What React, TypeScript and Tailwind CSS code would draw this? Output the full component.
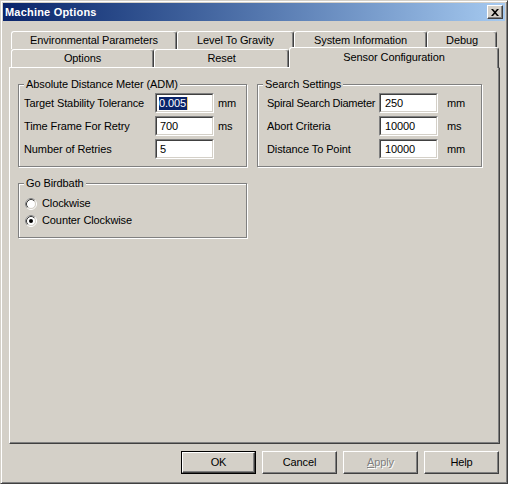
import React from "react";

const raised =
  "border border-t-white border-l-white border-r-[#404040] border-b-[#404040] shadow-[inset_-1px_-1px_0_#808080]";

function Tab({ label, w, selected }: { label: string; w: string; selected?: boolean }) {
  if (selected) {
    return (
      <div
        className={`${w} h-[21px] -mb-[1px] relative z-10 shrink-0 flex items-center justify-center bg-[#d4d0c8] border-t border-l border-r border-t-white border-l-white border-r-[#404040] rounded-t-[3px] shadow-[inset_-1px_0_0_#808080] pb-[2px]`}
      >
        {label}
      </div>
    );
  }
  return (
    <div
      className={`${w} h-[18px] shrink-0 flex items-center justify-center bg-[#d4d0c8] border-t border-l border-r border-t-white border-l-white border-r-[#404040] rounded-t-[3px] shadow-[inset_-1px_0_0_#808080]`}
    >
      {label}
    </div>
  );
}

function Field({ value, selected, pl }: { value: string; selected?: boolean; pl: string }) {
  return (
    <div className="w-[59px] h-[20px] border border-t-[#808080] border-l-[#808080] border-r-white border-b-white">
      <div
        className={`h-full border border-t-[#404040] border-l-[#404040] border-r-[#d4d0c8] border-b-[#d4d0c8] bg-white flex items-center ${pl}`}
      >
        {selected ? (
          <>
            <span className="bg-[#0a246a] text-white leading-[13px] pr-[1px]">{value}</span>
            <span className="w-[1px] h-[13px] bg-[#f0cf7c]" />
          </>
        ) : (
          <span className="leading-[13px]">{value}</span>
        )}
      </div>
    </div>
  );
}

function Group({
  title,
  w,
  children,
  cls,
  inner,
}: {
  title: string;
  w: string;
  children: React.ReactNode;
  cls?: string;
  inner: string;
}) {
  return (
    <div
      className={`${w} border border-[#808080] shadow-[inset_1px_1px_0_#ffffff,1px_1px_0_#ffffff] ${cls ?? ""}`}
    >
      <div className="-mt-[7px] ml-[5px] px-[2px] w-fit bg-[#d4d0c8] leading-[13px] h-[13px] whitespace-nowrap">
        {title}
      </div>
      <div className={inner}>{children}</div>
    </div>
  );
}

function Radio({ checked, label }: { checked?: boolean; label: string }) {
  return (
    <div className="h-[17px] flex items-center gap-[5px]">
      <svg width="12" height="12" viewBox="0 0 12 12" className="shrink-0">
        <circle cx="6" cy="6" r="5.5" fill="none" stroke="#ffffff" />
        <path d="M2.11 9.89 A5.5 5.5 0 0 1 9.89 2.11" fill="none" stroke="#808080" />
        <circle cx="6" cy="6" r="4.5" fill="#ffffff" stroke="#d4d0c8" />
        <path d="M2.82 9.18 A4.5 4.5 0 0 1 9.18 2.82" fill="none" stroke="#404040" />
        {checked && <circle cx="6" cy="6" r="2" fill="#000000" />}
      </svg>
      <span className="leading-[13px] whitespace-nowrap">{label}</span>
    </div>
  );
}

function Button({ children, def }: { children: React.ReactNode; def?: boolean }) {
  if (def) {
    return (
      <div className="w-[75px] h-[23px] border border-black">
        <div className={`h-full ${raised} flex items-center justify-center`}>{children}</div>
      </div>
    );
  }
  return <div className={`w-[75px] h-[23px] ${raised} flex items-center justify-center`}>{children}</div>;
}

export default function App() {
  return (
    <div
      className="w-[508px] h-[484px] bg-[#d4d0c8] text-black text-[11px] tracking-[-0.1px] flex flex-col p-[2px] border border-t-[#d4d0c8] border-l-[#d4d0c8] border-r-[#404040] border-b-[#404040] shadow-[inset_1px_1px_0_#ffffff,inset_-1px_-1px_0_#808080]"
      style={{ fontFamily: '"Liberation Sans", Arial, sans-serif' }}
    >
      {/* Title bar */}
      <div className="h-[18px] shrink-0 bg-linear-to-r from-[#0a246a] to-[#a6caf0] flex items-center justify-between pl-[2px] pr-[2px]">
        <span className="text-white font-bold text-[11px] leading-[13px] tracking-[0.2px]">Machine Options</span>
        <div className={`w-[16px] h-[14px] bg-[#d4d0c8] ${raised} flex items-center justify-center`}>
          <svg width="8" height="7" viewBox="0 0 8 7">
            <path d="M0 0h2l2 2.3L6 0h2L5 3.5 8 7H6L4 4.7 2 7H0l3-3.5z" fill="#000" />
          </svg>
        </div>
      </div>

      {/* Tab control */}
      <div className="ml-[6px] w-[491px] pt-[10px] flex flex-col">
        <div className="flex ml-[2px]">
          <Tab label="Environmental Parameters" w="w-[166px]" />
          <Tab label="Level To Gravity" w="w-[117px]" />
          <Tab label="System Information" w="w-[133px]" />
          <Tab label="Debug" w="w-[70px]" />
        </div>
        <div className="flex ml-[2px] h-[18px] items-end">
          <div className="self-start flex">
            <Tab label="Options" w="w-[143px]" />
            <Tab label="Reset" w="w-[135px]" />
          </div>
          <Tab label="Sensor Configuration" w="w-[210px]" selected />
        </div>

        {/* Panel */}
        <div className={`h-[377px] ${raised} pl-[8px] pt-[16px]`}>
          <div className="flex items-start">
            <Group title="Absolute Distance Meter (ADM)" w="w-[229px]" inner="pl-[5px] pb-[7px]">
              <div className="mt-[2px] grid grid-cols-[131px_59px_auto] gap-y-[3px] items-center whitespace-nowrap">
                <span>Target Stability Tolerance</span>
                <Field value="0.005" selected pl="pl-[2px]" />
                <span className="pl-[4px]">mm</span>
                <span>Time Frame For Retry</span>
                <Field value="700" pl="pl-[3px]" />
                <span className="pl-[4px]">ms</span>
                <span>Number of Retries</span>
                <Field value="5" pl="pl-[3px]" />
                <span />
              </div>
            </Group>
            <Group title="Search Settings" w="w-[225px]" cls="ml-[10px]" inner="pl-[9px] pb-[7px]">
              <div className="mt-[2px] grid grid-cols-[112px_60px_auto] gap-y-[3px] items-center whitespace-nowrap">
                <span className="tracking-[-0.25px]">Spiral Search Diameter</span>
                <div className="w-[60px]">
                  <Field value="250" pl="pl-[4px]" />
                </div>
                <span className="pl-[8px]">mm</span>
                <span>Abort Criteria</span>
                <Field value="10000" pl="pl-[4px]" />
                <span className="pl-[8px]">ms</span>
                <span>Distance To Point</span>
                <Field value="10000" pl="pl-[4px]" />
                <span className="pl-[8px]">mm</span>
              </div>
            </Group>
          </div>
          <Group title="Go Birdbath" w="w-[229px]" cls="mt-[16px]" inner="pl-[6px] pb-[8px]">
            <div className="mt-[5px] flex flex-col">
              <Radio label="Clockwise" />
              <Radio label="Counter Clockwise" checked />
            </div>
          </Group>
        </div>
      </div>

      {/* Buttons */}
      <div className="mt-[7px] mr-[6px] flex justify-end gap-[6px]">
        <Button def>OK</Button>
        <Button>Cancel</Button>
        <Button>
          <span className="text-[#808080] [text-shadow:1px_1px_0_#ffffff]">
            <span className="underline">A</span>pply
          </span>
        </Button>
        <Button>Help</Button>
      </div>
    </div>
  );
}
